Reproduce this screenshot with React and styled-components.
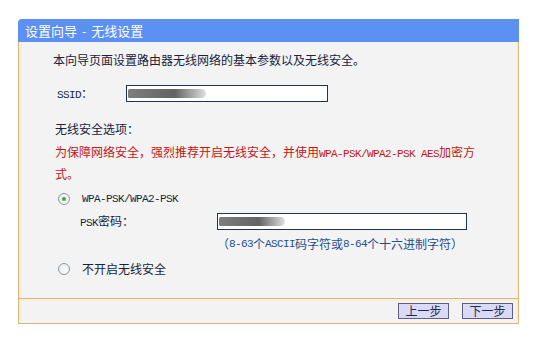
import styled, { createGlobalStyle } from "styled-components";

const GlobalStyle = createGlobalStyle`
  html, body {
    margin: 0;
    padding: 0;
    background: #ffffff;
  }
  body {
    font-family: "Noto Sans CJK SC", "Noto Sans", sans-serif;
    font-size: 12px;
    color: #18243c;
  }
`;

const Page = styled.div`
  width: 536px;
  height: 340px;
  box-sizing: border-box;
  padding: 19px 0 0 18px;
`;

const Panel = styled.div`
  width: 501px;
  display: flex;
  flex-direction: column;
`;

const Header = styled.div`
  height: 23px;
  line-height: 23px;
  padding-left: 7px;
  background: #5d90f3;
  border-radius: 4px 0 0 0;
  color: #ffffff;
  font-size: 13px;
  word-spacing: 2px;
`;

const Body = styled.div`
  height: 256px;
  box-sizing: border-box;
  display: flex;
  flex-direction: column;
  padding-left: 34px;
  background: #f3f3f3;
  border-left: 1px solid #d7b57c;
  border-right: 1px solid #d7b57c;
  box-shadow: inset 3px 0 0 #fdeedb, inset -2px 0 0 #fdeedb;
`;

const Row = styled.div`
  display: flex;
  align-items: center;
  height: ${(p) => p.$h || 16}px;
  margin-top: ${(p) => p.$top || 0}px;
  padding-left: ${(p) => p.$indent || 0}px;
  line-height: 16px;
  white-space: nowrap;
`;

const Warning = styled.p`
  margin: 5px 0 0 2px;
  width: 430px;
  line-height: 19px;
  color: #c31616;
`;

const Latin = styled.span`
  font-family: "Liberation Mono", monospace;
  font-size: 11px;
  letter-spacing: -0.6px;
`;

const Label = styled.span`
  width: ${(p) => p.$w}px;
  flex-shrink: 0;
`;

const Field = styled.div`
  width: ${(p) => p.$w}px;
  height: 17px;
  box-sizing: border-box;
  display: flex;
  align-items: center;
  padding-left: 1px;
  background: #ffffff;
  border: 1px solid #1f3350;
`;

const Smudge = styled.span`
  display: block;
  width: ${(p) => p.$w}px;
  height: 9px;
  border-radius: 2px 6px 6px 2px;
  background: linear-gradient(90deg, #7e7e7e, #636363 60%, rgba(100, 100, 100, 0.2));
  filter: blur(0.6px);
`;

const Radio = styled.span`
  position: relative;
  width: 12px;
  height: 12px;
  box-sizing: border-box;
  margin-right: 12px;
  border-radius: 50%;
  border: 1px solid #8d98a8;
  background: radial-gradient(circle at 60% 60%, #ffffff, #e2e4e8);

  &::after {
    content: "";
    display: ${(p) => (p.$checked ? "block" : "none")};
    position: absolute;
    left: 3px;
    top: 3px;
    width: 4px;
    height: 4px;
    border-radius: 50%;
    background: #3fa33a;
  }
`;

const Hint = styled(Row)`
  color: #234f92;
`;

const Footer = styled.div`
  height: 26px;
  box-sizing: border-box;
  display: flex;
  justify-content: flex-end;
  align-items: flex-start;
  gap: 13px;
  padding: 4px 5px 0 0;
  background: #f3f3f3;
  border: 1px solid #d7b57c;
  box-shadow: inset 3px 0 0 #fdeedb, inset -2px 0 0 #fdeedb, inset 0 2px 0 #fdeedb;
`;

const Button = styled.div`
  width: 51px;
  height: 16px;
  box-sizing: border-box;
  display: flex;
  align-items: center;
  justify-content: center;
  background: #dadaf7;
  border: 1px solid #5e5e80;
  color: #1c2a55;
  font-size: 12px;
  line-height: 14px;
`;

export default function App() {
  return (
    <Page>
      <GlobalStyle />
      <Panel>
        <Header>设置向导 - 无线设置</Header>
        <Body>
          <Row $top={10}>本向导页面设置路由器无线网络的基本参数以及无线安全。</Row>
          <Row $top={17} $h={17} $indent={4}>
            <Label $w={69}>
              <Latin>SSID</Latin>：
            </Label>
            <Field $w={202}>
              <Smudge $w={78} />
            </Field>
          </Row>
          <Row $top={19} $indent={2}>
            无线安全选项：
          </Row>
          <Warning>
            为保障网络安全，强烈推荐开启无线安全，并使用
            <Latin>WPA-PSK/WPA2-PSK AES</Latin>加密方式。
          </Warning>
          <Row $top={8} $indent={5}>
            <Radio $checked />
            <Latin>WPA-PSK/WPA2-PSK</Latin>
          </Row>
          <Row $top={6} $h={17} $indent={27}>
            <Label $w={137}>
              <Latin>PSK</Latin>密码：
            </Label>
            <Field $w={250}>
              <Smudge $w={66} />
            </Field>
          </Row>
          <Hint $top={6} $indent={164}>
            （<Latin>8-63</Latin>个<Latin>ASCII</Latin>码字符或<Latin>8-64</Latin>
            个十六进制字符）
          </Hint>
          <Row $top={9} $indent={5}>
            <Radio />
            不开启无线安全
          </Row>
        </Body>
        <Footer>
          <Button>上一步</Button>
          <Button>下一步</Button>
        </Footer>
      </Panel>
    </Page>
  );
}
